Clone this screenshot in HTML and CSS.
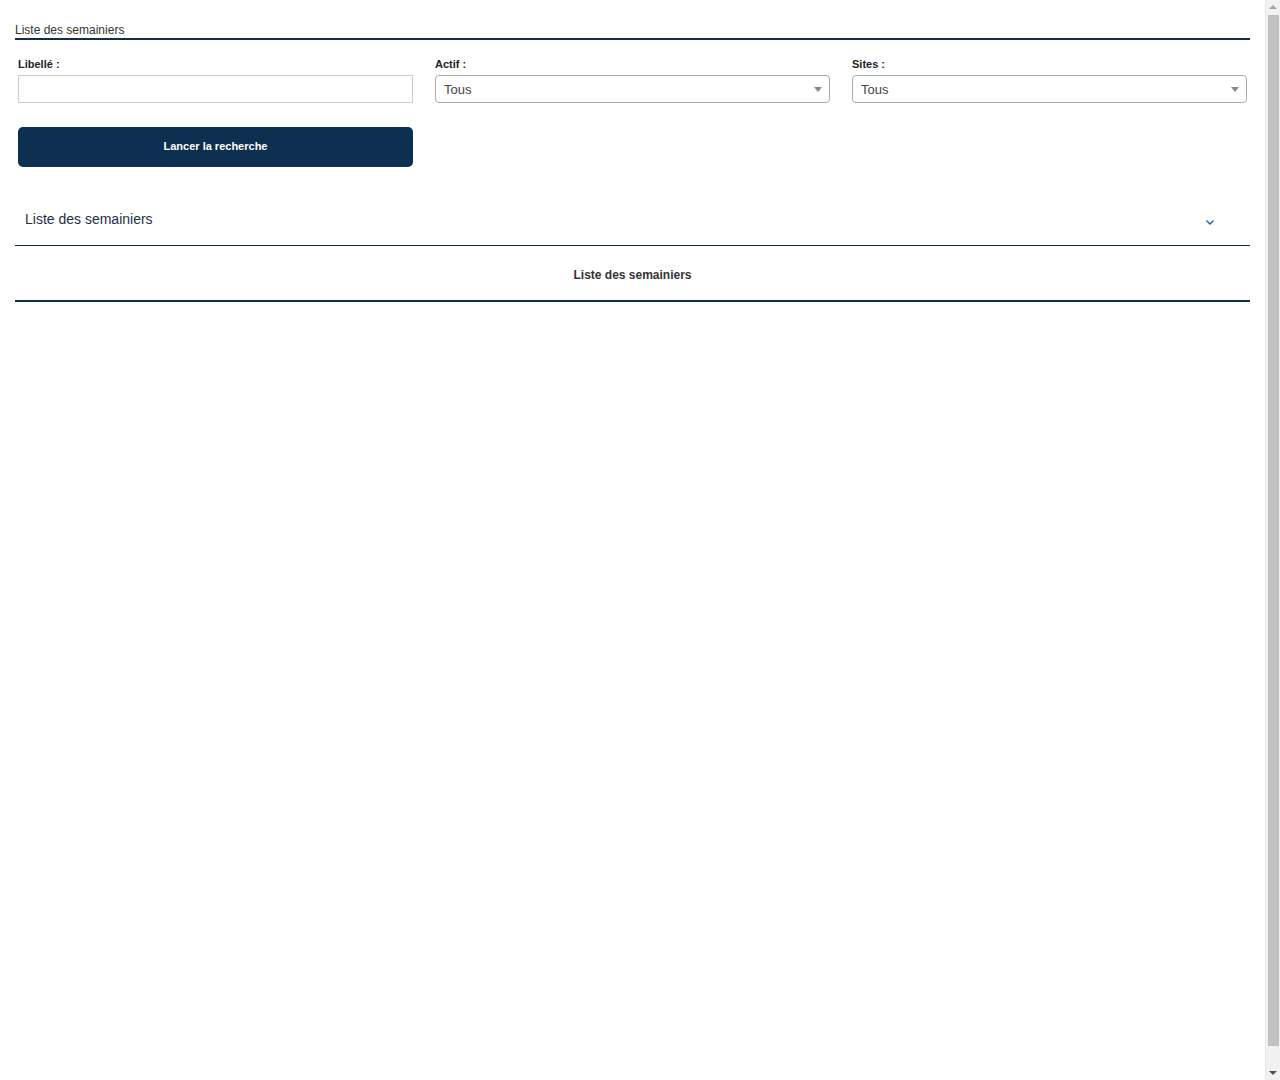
FILE: index.html
```html
<!DOCTYPE html>
<html lang="fr">

<head>
  <meta charset="UTF-8">
  <meta name="viewport" content="width=device-width, initial-scale=1.0">
  <title>Liste des semainiers</title>
  <link rel="stylesheet" href="styles.css">
</head>

<body>
  <div class="page">
    <h1 class="page-title">Liste des semainiers</h1>

    <form class="search">
      <div class="search__row">
        <div class="field">
          <label for="libelle">Libellé :</label>
          <input type="text" id="libelle" class="field__input">
        </div>
        <div class="field">
          <label>Actif :</label>
          <div class="select">
            <span class="select__value">Tous</span>
            <span class="select__arrow"></span>
          </div>
        </div>
        <div class="field">
          <label>Sites :</label>
          <div class="select">
            <span class="select__value">Tous</span>
            <span class="select__arrow"></span>
          </div>
        </div>
      </div>
      <div class="search__row">
        <div class="field">
          <button type="button" class="btn-search">Lancer la recherche</button>
        </div>
      </div>
    </form>

    <div class="panel">
      <div class="panel__header">
        <span>Liste des semainiers</span>
        <svg class="panel__chevron" width="10" height="8" viewBox="0 0 10 8">
          <path d="M1.5 2.5 L5 6 L8.5 2.5" fill="none" stroke="#1f5fa8" stroke-width="1.4" />
        </svg>
      </div>
      <div class="panel__body">
        <div class="table-title">Liste des semainiers</div>
      </div>
    </div>
  </div>

  <!-- window scrollbar -->
  <div class="scrollbar">
    <span class="scrollbar__btn scrollbar__btn--up"></span>
    <span class="scrollbar__thumb"></span>
    <span class="scrollbar__btn scrollbar__btn--down"></span>
  </div>
</body>

</html>
```

FILE: styles.css
```css
:root {
  --navy: #0d2f50;
}

* {
  box-sizing: border-box;
}

body {
  margin: 0;
  font-family: "Liberation Sans", Arial, sans-serif;
  color: #333;
  background: #fff;
}

.page {
  padding: 23px 30px 0 15px;
}

.page-title {
  margin: 0;
  font-size: 12px;
  font-weight: normal;
  line-height: 15px;
  padding-bottom: 0;
  border-bottom: 2px solid var(--navy);
  color: #333;
}

.search {
  padding: 17px 3px 0;
}

.search__row {
  display: grid;
  grid-template-columns: repeat(3, 395px);
  column-gap: 22px;
}

.search__row + .search__row {
  margin-top: 24px;
}

.field label {
  display: block;
  font-size: 11px;
  font-weight: bold;
  line-height: 14px;
  margin-bottom: 4px;
  color: #222;
}

.field__input {
  display: block;
  width: 100%;
  height: 28px;
  border: 1px solid #ccc;
  border-radius: 0;
  padding: 0 8px;
  font: inherit;
}

.select {
  display: flex;
  align-items: center;
  justify-content: space-between;
  height: 28px;
  border: 1px solid #aaa;
  border-radius: 4px;
  padding: 0 7px 0 8px;
}

.select__value {
  font-size: 13px;
  color: #444;
  padding-top: 1px;
}

.select__arrow {
  width: 0;
  height: 0;
  border-left: 4px solid transparent;
  border-right: 4px solid transparent;
  border-top: 5px solid #888;
}

.btn-search {
  display: block;
  width: 100%;
  height: 40px;
  padding: 0 0 2px;
  border: 0;
  border-radius: 5px;
  background: var(--navy);
  color: #fff;
  font: bold 11px "Liberation Sans", Arial, sans-serif;
  cursor: pointer;
}

.panel {
  margin-top: 32px;
}

.panel__header {
  display: flex;
  align-items: center;
  justify-content: space-between;
  height: 47px;
  padding: 0 35px 0 10px;
  border-bottom: 1px solid var(--navy);
  font-size: 14px;
  color: #1d2f45;
}

.panel__header span {
  margin-top: -6px;
}

.panel__chevron {
  margin-top: -1px;
}

.panel__body {
  border-bottom: 2px solid var(--navy);
}

.table-title {
  text-align: center;
  font-size: 12px;
  font-weight: bold;
  line-height: 15px;
  padding: 22px 0 17px;
  color: #333;
}

.scrollbar {
  position: fixed;
  top: 0;
  right: 0;
  bottom: 0;
  width: 15px;
  display: flex;
  flex-direction: column;
  align-items: center;
  background: #f1f1f1;
  border-left: 1px solid #e8e8e8;
}

.scrollbar__btn {
  flex: none;
  height: 14px;
  width: 100%;
  display: flex;
  align-items: center;
  justify-content: center;
}

.scrollbar__btn::before {
  content: "";
  width: 0;
  height: 0;
  border-left: 4px solid transparent;
  border-right: 4px solid transparent;
}

.scrollbar__btn--up::before {
  border-bottom: 4px solid #a3a3a3;
}

.scrollbar__btn--down::before {
  border-top: 4px solid #505050;
}

.scrollbar__thumb {
  flex: 1;
  width: 11px;
  margin: 1px 0 20px;
  background: #c1c1c1;
}
```
